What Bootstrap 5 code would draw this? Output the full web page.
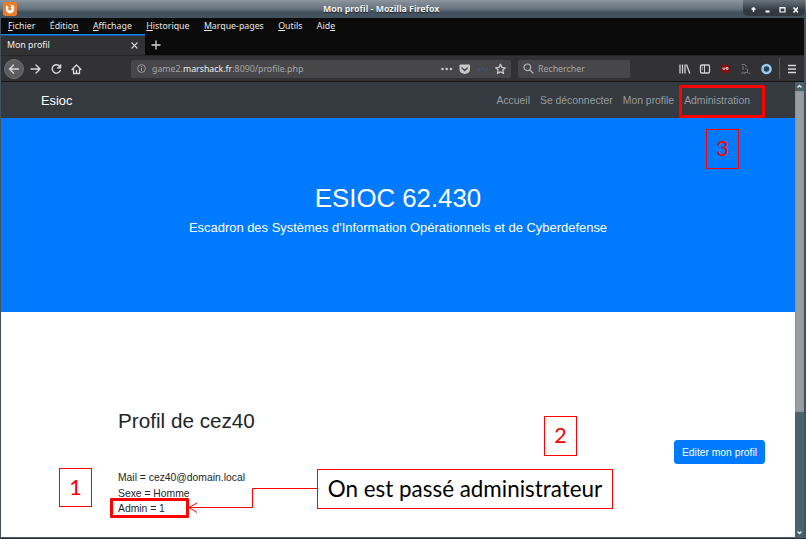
<!DOCTYPE html>
<html lang="fr">
<head>
<meta charset="utf-8">
<title>Mon profil</title>
<link href="https://cdn.jsdelivr.net/npm/bootstrap@5.3.0/dist/css/bootstrap.min.css" rel="stylesheet">
<style>
html, body { height: 539px; overflow: hidden; }
body { background: #222c35; font-family: "Liberation Sans", Arial, sans-serif; }
.window { width: 806px; height: 539px; padding: 0 2px 0 1px; background: #43525f; font-family: "Noto Sans", sans-serif; font-size: 8.8px; line-height: 12px; }
.titlebar { height: 18px; margin: 0 -2px 0 -1px; background: linear-gradient(#8f989f 0, #858f97 8%, #66737e 50%, #42515f 68%, #43525f 100%); color: #f0f2f3; }
.window-title { padding-left: 323px; font-weight: 700; text-shadow: 0 1px 1px #222; white-space: nowrap; }
.app-icon { left: 3px; top: 2px; }
.window-buttons { right: 1px; top: 0; width: 62px; height: 16px; padding: 0 7px; background: linear-gradient(#69747d, #303840 65%); border-radius: 0 0 5px 5px; }
.menubar { height: 16px; background: #0b0b0b; color: #e6e6e6; padding: 2px 0 0 7px; gap: 14.4px; }
.tabstrip { height: 21px; background: #0b0b0b; }
.tab-item { width: 144px; background: #323234; border-top: 1.5px solid #0a84ff; color: #f0f0f0; padding: 0 6px; box-shadow: inset 0 1px #1a5b9c; }
.toolbar { height: 27px; background: #323234; border-bottom: 1px solid #121214; border-top: 1px solid #262628; padding: 0 6px 0 3px; color: #d0d0d1; }
.field-box { height: 18px; background: #474749; border-radius: 2px; color: #a6a6a8; }
.url-box { width: 380px; margin-left: 47px; padding: 0 3px 0 6px; }
.url-text { padding-left: 6px; }
.search-box { width: 112px; margin-left: 7px; padding-left: 5px; }
.host { color: #ededee; }
.viewport-row { height: 455px; }
.page { width: 794px; background: #fff; font-family: "Liberation Sans", Arial, sans-serif; font-size: 10.35px; line-height: 15.5px; color: #212529; }
.site-nav { height: 36px; background: #343a40; padding: 1px 40px 0 40px; }
.site-nav .navbar-brand { font-size: 12.8px; line-height: 18px; padding: 0; margin: 0; color: #fff; }
.site-nav .nav-link { padding: 0 5px; font-size: 10.4px; color: #999c9f; white-space: nowrap; }
.hero { height: 194px; background: #007bff; color: #fff; padding-top: 65px; }
.hero h1 { font-size: 25.8px; line-height: 31px; margin: 0 0 4px; font-weight: 400; }
.hero p { font-size: 12.95px; line-height: 20px; margin: 0; }
.profile { padding: 96px 30px 0 117px; }
.profile h2 { font-size: 20.7px; line-height: 25px; font-weight: 400; margin: 0; }
.btn-edit { font-size: 10.3px; line-height: 15px; padding: 4px 7px 3px; width: 91px; border-radius: 3px; background: #007bff; border-color: #007bff; color: #fff; white-space: nowrap; margin-top: 7px; }
.details { margin-top: 6px; }
.scrollbar { width: 9px; background: #4a626a; }
.scroll-end { height: 9px; }
.scroll-thumb { height: 321px; background: #969ea3; border: 1px solid #8a9499; }
.bottom-edge { height: 2px; margin: 0 -2px 0 -1px; background: #222c35; border-top: 1px solid #53616b; }
.frame { border: 3px solid #f00; border-radius: 1px; }
.note { border: 1px solid #f00; font: 21.5px/1 Lato, "Open Sans", sans-serif; color: #f00; display: flex; align-items: center; justify-content: center; white-space: nowrap; }
.frame-admin { left: 679px; top: 85px; width: 86px; height: 33px; }
.frame-flag { left: 110px; top: 498px; width: 79px; height: 20px; }
.note-1 { left: 59px; top: 468px; width: 33px; height: 39px; }
.note-2 { left: 544px; top: 416px; width: 33px; height: 40px; }
.note-3 { left: 706px; top: 129px; width: 33px; height: 40px; }
.note-text { left: 317px; top: 469px; width: 296px; height: 40px; color: #000; font-size: 22.4px; }
.arrow { left: 188px; top: 484px; }
</style>
<script src="https://cdn.jsdelivr.net/npm/bootstrap@5.3.0/dist/js/bootstrap.bundle.min.js"></script>
</head>
<body>
<div class="window position-relative">
  <header class="titlebar position-relative d-flex align-items-center">
    <svg class="app-icon position-absolute" width="14" height="14" viewBox="0 0 14 14"><rect width="14" height="14" rx="2.5" fill="#ef7b2c"/><path d="M3.2 3.200C2 8 4 11.300 7 11.300s5-2.800 4-6.800C10.500 3.200 9 2.400 7.300 2.800l1.300 1.700-1.300.8C9 6.200 9 8.500 7 8.500S4.800 6.500 5.500 5z" fill="#fff"/></svg>
    <div class="window-title">Mon profil - Mozilla Firefox</div>
    <div class="window-buttons position-absolute d-flex align-items-center justify-content-between">
      <svg width="48" height="14" viewBox="0 0 48 14" fill="none" stroke="#fff"><path d="M3.500 11V7M1.500 8h4M2.500 7h2" stroke-width="1.500"/><path d="M15.500 10.500h4" stroke-width="2"/><path d="M30 6.500h5v4.500h-5zM30 7h5" stroke-width="1.200"/><path d="M43.500 6.500l4.500 5M48 6.500l-4.500 5" stroke-width="1.600"/></svg>
    </div>
  </header>
  <nav class="menubar d-flex">
    <span><u>F</u>ichier</span><span>Éditio<u>n</u></span><span><u>A</u>ffichage</span><span><u>H</u>istorique</span><span><u>M</u>arque-pages</span><span><u>O</u>utils</span><span>Aid<u>e</u></span>
  </nav>
  <div class="tabstrip d-flex">
    <div class="tab-item d-flex align-items-center justify-content-between"><span>Mon profil</span>
      <svg width="9" height="9" viewBox="0 0 9 9" stroke="#d0d0d0" stroke-width="1.100"><path d="M1.500 1.500l6 6M7.500 1.500l-6 6"/></svg></div>
    <svg class="align-self-center" style="margin-left:6px" width="10" height="10" viewBox="0 0 10 10" stroke="#d8d8d8" stroke-width="1.300"><path d="M.5 5h9M5 .5v9"/></svg>
  </div>
  <div class="toolbar d-flex align-items-center">
    <svg width="80" height="22" viewBox="0 0 80 22" fill="none" stroke="#d7d7d8" stroke-width="1.400" stroke-linecap="round" stroke-linejoin="round">
      <circle cx="10" cy="11" r="9.500" fill="#5d5d5f" stroke="#717173" stroke-width="1"/>
      <path d="M14.500 11h-9M9.500 7l-4 4 4 4M27 11h9M32 7l4 4-4 4"/>
      <path d="M56 8.700A4.200 4.200 0 1 0 56.300 12.500"/><path d="M57 6.500v3.700h-3.700z" fill="#d7d7d8" stroke-width=".6"/>
      <path d="M68 11.500l4.500-4.500 4.500 4.500M69.500 11v4.500h6V11M72.500 15.500V12.500" stroke-width="1.300"/>
    </svg>
    <div class="field-box url-box d-flex align-items-center">
      <svg width="9" height="9" viewBox="0 0 9 9" fill="none" stroke="#a6a6a8"><circle cx="4.500" cy="4.500" r="3.900" stroke-width=".9"/><path d="M4.500 4v2.700M4.500 2.200v1"/></svg>
      <span class="url-text flex-grow-1 text-nowrap">game2.<span class="host">marshack.fr</span>:8090/profile.php</span>
      <svg width="68" height="14" viewBox="0 0 68 14">
        <g fill="#c9c9ca"><circle cx="2.500" cy="7" r="1.300"/><circle cx="6.700" cy="7" r="1.300"/><circle cx="10.900" cy="7" r="1.300"/><path d="M20.500 2.500h8.500a1 1 0 0 1 1 1V7c0 6.500-10.500 6.500-10.500 0V3.500a1 1 0 0 1 1-1z"/></g>
        <path d="M22 6l2.700 2.500L27.400 6" fill="none" stroke="#474749" stroke-width="1.400" stroke-linecap="round"/>
        <text x="37.500" y="9" font-size="5.500" font-weight="700" font-style="italic" fill="#434c85" textLength="11">php</text>
        <path d="M60.500 2.300l1.400 3.100 3.400.4-2.500 2.300.7 3.400-3-1.700-3 1.700.7-3.400-2.500-2.300 3.400-.4z" fill="none" stroke="#c9c9ca" stroke-width="1.300" stroke-linejoin="round"/>
      </svg>
    </div>
    <div class="field-box search-box d-flex align-items-center">
      <svg width="11" height="11" viewBox="0 0 11 11" fill="none" stroke="#b5b5b6" stroke-width="1.200"><circle cx="4.300" cy="4.300" r="3.300"/><path d="M6.800 6.800l3.700 3.700"/></svg>
      <span class="ps-1">Rechercher</span>
    </div>
    <svg class="ms-auto" width="119" height="26" viewBox="0 0 119 26" fill="none">
      <g stroke="#d0d0d1" stroke-width="1.300"><path d="M1 8.500v9M3.500 8.500v9M6 8.500v9M7.500 8.500l3.300 9"/><rect x="21.500" y="9" width="9" height="8" rx="1.200"/><path d="M25.500 9v8M23 11h1M23 13h1" stroke-width="1"/></g>
      <path d="M46.500 8c-1.400 1-2.800 1.300-4.500 1.400 0 4.500.7 6.700 4.500 8.600 3.800-1.900 4.500-4.100 4.500-8.600-1.700-.1-3.100-.4-4.500-1.400z" fill="#900810"/>
      <path d="M44 11.500v1.700h1.900v-1.700M47.200 11.500H49v1.700h-1.800z" stroke="#f0dcdc" stroke-width=".9"/>
      <g stroke="#77777a" stroke-width="1"><path d="M62.500 8.500h3.500l1.500 2.500M64 10v4M66.500 12.500a2.200 2.200 0 1 1-2 3.300M62 17h5M68.500 13v4M69.500 17.200h1.800"/></g>
      <circle cx="87.500" cy="13" r="4" fill="#303c47" stroke="#91caf4" stroke-width="2.600"/>
      <path d="M100.500 2v21" stroke="#58585a"/>
      <path d="M109 9.500h8M109 13h8M109 16.500h8" stroke="#d7d7d8" stroke-width="1.300"/>
    </svg>
  </div>
  <div class="viewport-row d-flex">
    <main class="page">
      <nav class="site-nav navbar navbar-dark d-flex flex-nowrap justify-content-between">
        <a class="navbar-brand">Esioc</a>
        <div class="navbar-nav flex-row"><a class="nav-link">Accueil</a><a class="nav-link">Se déconnecter</a><a class="nav-link">Mon profile</a><a class="nav-link">Administration</a></div>
      </nav>
      <section class="hero text-center"><h1>ESIOC 62.430</h1><p>Escadron des Systèmes d'Information Opérationnels et de Cyberdefense</p></section>
      <section class="profile">
        <h2>Profil de cez40</h2>
        <div class="d-flex justify-content-end"><button class="btn btn-primary btn-edit">Editer mon profil</button></div>
        <div class="details"><div>Mail = cez40@domain.local</div><div>Sexe = Homme</div><div>Admin = 1</div></div>
      </section>
    </main>
    <div class="scrollbar d-flex flex-column">
      <svg class="scroll-end" width="9" height="9" viewBox="0 0 9 9" fill="none" stroke="#e8eced" stroke-width="1.300"><path d="M2.500 5.500l2-2 2 2"/></svg>
      <div class="scroll-thumb"></div>
      <svg class="scroll-end mt-auto" width="9" height="9" viewBox="0 0 9 9" fill="none" stroke="#e8eced" stroke-width="1.300"><path d="M2.500 3.500l2 2 2-2"/></svg>
    </div>
  </div>
  <div class="bottom-edge"></div>

  <div class="frame frame-admin position-absolute"></div>
  <div class="frame frame-flag position-absolute"></div>
  <div class="note note-1 position-absolute">1</div>
  <div class="note note-2 position-absolute">2</div>
  <div class="note note-3 position-absolute">3</div>
  <div class="note note-text position-absolute">On est passé administrateur</div>
  <svg class="arrow position-absolute" width="130" height="30" viewBox="0 0 130 30" fill="none" stroke="#f00"><path d="M129.500 4.500h-65v19H1M9 19L1 23.500l8 5"/></svg>
</div>
</body>
</html>
